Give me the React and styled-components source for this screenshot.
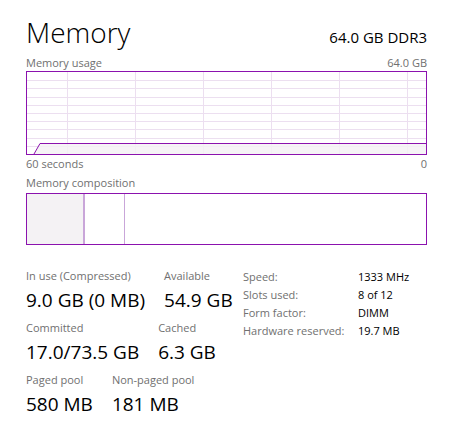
import React from 'react'
import styled, { createGlobalStyle } from 'styled-components'

const GlobalStyle = createGlobalStyle`
  html, body {
    margin: 0;
    padding: 0;
    background: #fff;
  }
  body {
    font-family: 'Open Sans', 'Noto Sans', sans-serif;
    color: #000;
  }
`

const Page = styled.div`
  width: 452px;
  height: 439px;
  padding: 14px 25px 0 26px;
  box-sizing: border-box;
  display: flex;
  flex-direction: column;
`

const Header = styled.div`
  display: flex;
  justify-content: space-between;
  align-items: baseline;
  height: 37px;
`

const Title = styled.h1`
  margin: 0;
  font-size: 28px;
  font-weight: 300;
  line-height: 37px;
`

const Spec = styled.div`
  font-size: 15px;
  font-weight: 400;
`

const CaptionRow = styled.div`
  display: flex;
  justify-content: space-between;
  font-size: 11px;
  line-height: 15px;
  color: #707070;
  margin-top: ${(p) => p.$top || 0}px;
`

const Chart = styled.div`
  height: ${(p) => p.$height}px;
  border: 1px solid #8b12ae;
  box-sizing: border-box;
  margin-top: 1px;
  overflow: hidden;
`

const Composition = styled.div`
  height: 52px;
  border: 1px solid #8b12ae;
  box-sizing: border-box;
  display: flex;
  margin-top: 3px;
`

const Segment = styled.div`
  width: ${(p) => p.$width}px;
  background: ${(p) => p.$fill || 'transparent'};
  border-right: ${(p) => p.$line}px solid #c9a6d9;
`

const Stats = styled.div`
  display: flex;
  align-items: flex-start;
  margin-top: 23px;
`

const LeftStats = styled.div`
  width: 217px;
  display: flex;
  flex-direction: column;
  gap: 6px;
`

const StatRow = styled.div`
  display: flex;
  gap: 19px;
`

const Stat = styled.div`
  display: flex;
  flex-direction: column;
`

const Label = styled.div`
  font-size: 11px;
  line-height: 16px;
  color: #707070;
  white-space: nowrap;
`

const Value = styled.div`
  font-size: 19px;
  line-height: 28px;
  margin-top: 2px;
  white-space: nowrap;
`

const Details = styled.div`
  display: grid;
  grid-template-columns: 115px auto;
  align-content: start;
  row-gap: 3px;
  font-size: 11px;
  line-height: 15px;
  padding-top: 1px;
`

const DetailKey = styled.div`
  color: #707070;
`

const DetailVal = styled.div`
  color: #000;
`

function UsageGraph() {
  const w = 400
  const h = 82
  const rows = []
  for (let i = 1; i < 10; i++) rows.push(Math.round((h / 10) * i))
  const cols = [40, 108, 176, 244, 312, 380]
  return (
    <svg width={w} height={h} style={{ display: 'block' }}>
      {rows.map((y) => (
        <line key={'r' + y} x1="0" x2={w} y1={y + 0.5} y2={y + 0.5} stroke="#ecdff0" strokeWidth="1" />
      ))}
      {cols.map((x) => (
        <line key={'c' + x} x1={x + 0.5} x2={x + 0.5} y1="0" y2={h} stroke="#ecdff0" strokeWidth="1" />
      ))}
      <polygon points={`7,${h} 13,71.5 ${w},71.5 ${w},${h}`} fill="#f4f2f4" fillOpacity="0.85" />
      <polyline points={`7,${h} 13,71.5 ${w},71.5`} fill="none" stroke="#8b12ae" strokeWidth="1" />
    </svg>
  )
}

const stats = [
  [
    ['In use (Compressed)', '9.0 GB (0 MB)'],
    ['Available', '54.9 GB'],
  ],
  [
    ['Committed', '17.0/73.5 GB'],
    ['Cached', '6.3 GB'],
  ],
  [
    ['Paged pool', '580 MB'],
    ['Non-paged pool', '181 MB'],
  ],
]

const details = [
  ['Speed:', '1333 MHz'],
  ['Slots used:', '8 of 12'],
  ['Form factor:', 'DIMM'],
  ['Hardware reserved:', '19.7 MB'],
]

export default function App() {
  return (
    <>
      <GlobalStyle />
      <Page>
        <Header>
          <Title>Memory</Title>
          <Spec>64.0 GB DDR3</Spec>
        </Header>
        <CaptionRow $top={4}>
          <span>Memory usage</span>
          <span>64.0 GB</span>
        </CaptionRow>
        <Chart $height={84}>
          <UsageGraph />
        </Chart>
        <CaptionRow $top={1}>
          <span>60 seconds</span>
          <span>0</span>
        </CaptionRow>
        <CaptionRow $top={4}>
          <span>Memory composition</span>
        </CaptionRow>
        <Composition>
          <Segment $width={56} $fill="#f4f2f4" $line={2} />
          <Segment $width={39} $line={1} />
        </Composition>
        <Stats>
          <LeftStats>
            {stats.map((row, i) => (
              <StatRow key={i}>
                {row.map(([label, value]) => (
                  <Stat key={label}>
                    <Label>{label}</Label>
                    <Value>{value}</Value>
                  </Stat>
                ))}
              </StatRow>
            ))}
          </LeftStats>
          <Details>
            {details.map(([k, v]) => (
              <React.Fragment key={k}>
                <DetailKey>{k}</DetailKey>
                <DetailVal>{v}</DetailVal>
              </React.Fragment>
            ))}
          </Details>
        </Stats>
      </Page>
    </>
  )
}
